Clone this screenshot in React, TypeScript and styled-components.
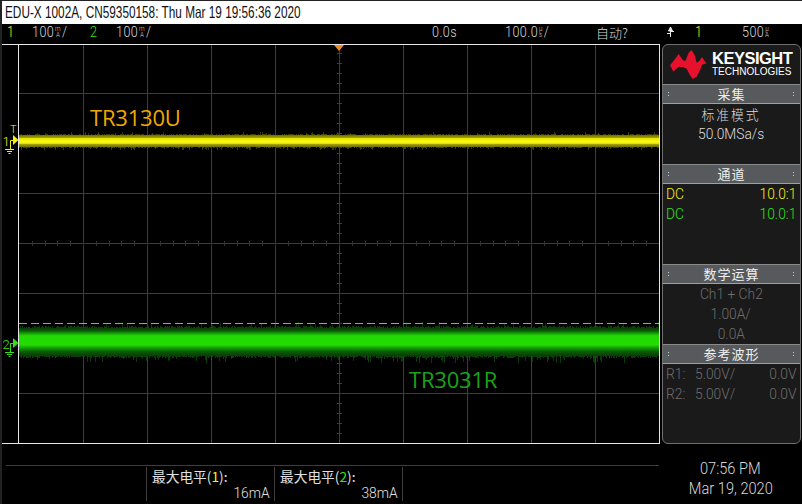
import React from "react";
import styled, { createGlobalStyle, css } from "styled-components";

const GlobalStyle = createGlobalStyle`
	html, body {
		margin: 0;
		padding: 0;
		background: #000;
	}
`;

const UI_FONT = `Roboto, "Liberation Sans", "Noto Sans CJK SC", sans-serif`;
const CJK_FONT = `"Noto Sans CJK SC", Roboto, sans-serif`;

const YELLOW = "#f5f01a";
const GREEN = "#35e01c";

// the scope's own font is tall and thin, so every label is squeezed a bit
const narrow = css`
	display: inline-block;
	white-space: nowrap;
	font-weight: 300;
	transform: scaleX(0.89);
`;

// seeded so the noise stays the same from one load to the next
function makeRandom(seed: number) {
	let s = seed;
	return () => {
		s = (s * 16807) % 2147483647;
		return (s - 1) / 2147483646;
	};
}

const V_LINES = [64, 128, 192, 256, 320, 384, 448, 512, 576];
const H_LINES = [48, 98, 148, 198, 248, 298, 348];

function TraceNoise(props: { top: number; bottom: number; color: string; seed: number; amount: number; reach: number }) {
	const { top, bottom, color, seed, amount, reach } = props;
	const rand = makeRandom(seed);
	const bars: React.ReactNode[] = [];
	for (let x = 0; x < 640; x++) {
		const up = rand() * amount;
		const down = rand() * amount;
		const spike = rand();
		bars.push(<rect key={`u${x}`} x={x} y={top - up} width={1} height={up} fill={color} opacity={0.7} />);
		bars.push(<rect key={`d${x}`} x={x} y={bottom} width={1} height={down} fill={color} opacity={0.7} />);
		if (spike > 0.86) {
			bars.push(<rect key={`s${x}`} x={x} y={bottom} width={1} height={amount + rand() * reach} fill={color} opacity={0.65} />);
		}
		if (spike < 0.06) {
			const len = amount + rand() * reach;
			bars.push(<rect key={`t${x}`} x={x} y={top - len} width={1} height={len} fill={color} opacity={0.6} />);
		}
	}
	return <g>{bars}</g>;
}

function Graticule() {
	return (
		<PlotSvg width={640} height={398} viewBox="0 0 640 398" shapeRendering="crispEdges">
			<defs>
				<linearGradient id="yellowBand" x1="0" y1="0" x2="0" y2="1">
					<stop offset="0" stopColor="#6e6c00" />
					<stop offset="0.2" stopColor="#9a9800" />
					<stop offset="0.27" stopColor="#e2e000" />
					<stop offset="0.42" stopColor="#f4f200" />
					<stop offset="0.58" stopColor="#fbf920" />
					<stop offset="0.72" stopColor="#e2e000" />
					<stop offset="0.8" stopColor="#9a9800" />
					<stop offset="1" stopColor="#6e6c00" />
				</linearGradient>
				<linearGradient id="greenBand" x1="0" y1="0" x2="0" y2="1">
					<stop offset="0" stopColor="#083c05" />
					<stop offset="0.1" stopColor="#0c5a07" />
					<stop offset="0.18" stopColor="#129a06" />
					<stop offset="0.28" stopColor="#22d802" />
					<stop offset="0.6" stopColor="#24dc02" />
					<stop offset="0.72" stopColor="#129a06" />
					<stop offset="0.85" stopColor="#0c5a07" />
					<stop offset="1" stopColor="#083c05" />
				</linearGradient>
			</defs>
			{V_LINES.map((x) => (
				<rect key={x} x={x} y={0} width={1} height={398} fill="#3c3c3c" />
			))}
			{H_LINES.map((y) => (
				<rect key={y} x={0} y={y} width={640} height={1} fill="#3c3c3c" />
			))}
			{Array.from({ length: 39 }, (_, i) => (
				<rect key={i} x={318} y={10 * i + 8} width={5} height={1} fill="#3c3c3c" />
			))}
			{Array.from({ length: 49 }, (_, i) => (
				<rect key={i} x={Math.round(12.8 * (i + 1))} y={196} width={1} height={5} fill="#333" />
			))}
			<TraceNoise top={90} bottom={102} color="#5c5a00" seed={4211} amount={1} reach={2.5} />
			<rect x={0} y={90} width={640} height={12} fill="url(#yellowBand)" />
			<TraceNoise top={283} bottom={311} color="#0c5a08" seed={981} amount={2} reach={5} />
			<rect x={0} y={283} width={640} height={28} fill="url(#greenBand)" />
			{Array.from({ length: 54 }, (_, i) => (
				<rect key={i} x={12 * i} y={278} width={8} height={1} fill="#f08c28" />
			))}
		</PlotSvg>
	);
}

function ChannelMarker({ num, color }: { num: string; color: string }) {
	return (
		<MarkerSvg width={18} height={22} viewBox="0 0 18 22">
			<text x={0.5} y={12} fontSize={13} fontFamily="Roboto, sans-serif" fontWeight={300} fill={color}>
				{num}
			</text>
			<path d="M8.5 15 V6.5 H11 M3 15.5 H12 M5 17.5 H10 M6.5 19.5 H8.5" stroke={color} strokeWidth={1} fill="none" />
			<path d="M11 1 L16.5 6 L11 11 Z" fill={color} />
		</MarkerSvg>
	);
}

function KeysightLogo() {
	return (
		<LogoSvg width={37} height={29} viewBox="0 0 37 29">
			<path
				d="M0 15.3 L4.3 10 L8.7 4 L12.7 10 L15.3 11 L18.7 2.7 L21.3 0 L24.3 4.3 L26.7 12.7 L29.3 11 L32 7 L35.3 12 L36.7 13.3 L32 14.7 L30 20 L26.7 26.7 L22.7 29 L20 25.3 L16.7 18.7 L13 17 L9.3 16.7 L6 19 L3.3 21.7 L1 17 Z"
				fill="#e8112d"
			/>
		</LogoSvg>
	);
}

function Unit({ top, bottom }: { top: string; bottom: string }) {
	return (
		<UnitStack>
			<span>{top}</span>
			<span>{bottom}</span>
		</UnitStack>
	);
}

function SectionHeader({ children }: { children: React.ReactNode }) {
	return (
		<Header>
			<Grip />
			<span>{children}</span>
			<Grip />
		</Header>
	);
}

export default function App() {
	return (
		<Screen>
			<GlobalStyle />
			<TitleBar>
				<TitleText>EDU-X 1002A, CN59350158: Thu Mar 19 19:56:36 2020</TitleText>
			</TitleBar>
			<StatusBar>
				<ChannelCell $left={7} $color={YELLOW}>1</ChannelCell>
				<StatusCell $left={32}>100<Unit top="m" bottom="A" />/</StatusCell>
				<ChannelCell $left={90} $color={GREEN}>2</ChannelCell>
				<StatusCell $left={116}>100<Unit top="m" bottom="A" />/</StatusCell>
				<StatusCell $left={432}>0.0s</StatusCell>
				<StatusCell $left={505}>100.0<Unit top="µ" bottom="s" />/</StatusCell>
				<StatusCell $left={596} $cjk>自动?</StatusCell>
				<TriggerIcon width={10} height={12} viewBox="0 0 10 12">
					<path d="M4.5 11 V1 M1 7.5 H4.5 M4.5 5.5 H8 M2.5 5 L4.5 1 L6.5 5 Z" stroke="#e8e8e8" strokeWidth={1} fill="#e8e8e8" />
				</TriggerIcon>
				<ChannelCell $left={695} $color={YELLOW}>1</ChannelCell>
				<StatusCell $left={742}>500<Unit top="µ" bottom="A" /></StatusCell>
			</StatusBar>
			<Middle>
				<Plot>
					<Graticule />
					<TriggerTop />
					<TriggerT>T</TriggerT>
					<MarkerSlot $top={89}>
						<ChannelMarker num="1" color={YELLOW} />
					</MarkerSlot>
					<MarkerSlot $top={292}>
						<ChannelMarker num="2" color={GREEN} />
					</MarkerSlot>
					<TraceLabel $left={90} $top={59} $color="#f0a800">TR3130U</TraceLabel>
					<TraceLabel $left={409} $top={321} $color="#1aa31a">TR3031R</TraceLabel>
				</Plot>
				<Panel>
					<LogoBox>
						<KeysightLogo />
						<Brand>
							<BrandName>KEYSIGHT</BrandName>
							<BrandSub>TECHNOLOGIES</BrandSub>
						</Brand>
					</LogoBox>
					<SectionHeader>采集</SectionHeader>
					<Section $height={60}>
						<CenterLine $cjk><span>标准模式</span></CenterLine>
						<CenterLine><span>50.0MSa/s</span></CenterLine>
					</Section>
					<SectionHeader>通道</SectionHeader>
					<Section $height={80}>
						<SplitLine $color={YELLOW}><LeftText>DC</LeftText><RightText>10.0:1</RightText></SplitLine>
						<SplitLine $color={GREEN}><LeftText>DC</LeftText><RightText>10.0:1</RightText></SplitLine>
					</Section>
					<SectionHeader>数学运算</SectionHeader>
					<Section $height={60}>
						<CenterLine $dim><span>Ch1 + Ch2</span></CenterLine>
						<CenterLine $dim><span>1.00A/</span></CenterLine>
						<CenterLine $dim><span>0.0A</span></CenterLine>
					</Section>
					<SectionHeader>参考波形</SectionHeader>
					<Section $height={78}>
						<RefLine><LeftText>R1:</LeftText><LeftText>5.00V/</LeftText><RightText>0.0V</RightText></RefLine>
						<RefLine><LeftText>R2:</LeftText><LeftText>5.00V/</LeftText><RightText>0.0V</RightText></RefLine>
					</Section>
				</Panel>
			</Middle>
			<Bottom>
				<Measures>
					<MeasureBlank />
					<Measure>
						<MeasureName>最大电平(<Num $color={YELLOW}>1</Num>):</MeasureName>
						<MeasureValue><RightText>16mA</RightText></MeasureValue>
					</Measure>
					<Measure>
						<MeasureName>最大电平(<Num $color={GREEN}>2</Num>):</MeasureName>
						<MeasureValue><RightText>38mA</RightText></MeasureValue>
					</Measure>
				</Measures>
				<Clock>
					<ClockText>07:56 PM</ClockText>
					<ClockText>Mar 19, 2020</ClockText>
				</Clock>
			</Bottom>
		</Screen>
	);
}

const Screen = styled.div`
	width: 802px;
	height: 504px;
	background: #000;
	display: flex;
	flex-direction: column;
	overflow: hidden;
	border-left: 2px solid #222;
	box-sizing: border-box;
	font-family: ${UI_FONT};
`;

const TitleBar = styled.div`
	height: 24px;
	background: #fff;
	border-top: 1px solid #222;
	box-sizing: border-box;
	padding-left: 3px;
	color: #111;
	overflow: hidden;
`;

const TitleText = styled.span`
	display: inline-block;
	white-space: nowrap;
	font: 16.5px/22px "Liberation Sans", sans-serif;
	transform: scaleX(0.715);
	transform-origin: left center;
`;

const StatusBar = styled.div`
	position: relative;
	height: 20px;
	flex: none;
`;

const StatusCell = styled.div<{ $left: number; $cjk?: boolean }>`
	position: absolute;
	left: ${(p) => p.$left - 2}px;
	top: -2px;
	height: 20px;
	display: flex;
	align-items: center;
	color: #d8d8d8;
	font-family: ${(p) => (p.$cjk ? CJK_FONT : UI_FONT)};
	font-weight: 300;
	font-size: ${(p) => (p.$cjk ? 13 : 15)}px;
	letter-spacing: ${(p) => (p.$cjk ? 0 : 0.5)}px;
	transform: scaleX(${(p) => (p.$cjk ? 1 : 0.84)});
	transform-origin: left center;
`;

const ChannelCell = styled(StatusCell)<{ $color: string }>`
	color: ${(p) => p.$color};
`;

const UnitStack = styled.span`
	display: inline-flex;
	flex-direction: column;
	align-items: center;
	font-size: 7.5px;
	line-height: 6px;
	margin: 0 1px;
`;

const TriggerIcon = styled.svg`
	position: absolute;
	left: 664px;
	top: 2px;
`;

const Middle = styled.div`
	display: flex;
	height: 400px;
	flex: none;
`;

const Plot = styled.div`
	position: relative;
	width: 658px;
	height: 400px;
	flex: none;
	box-sizing: border-box;
	border-top: 1px solid #e6e6e6;
	border-bottom: 1px solid #e6e6e6;
	border-right: 1px solid #e6e6e6;
	padding-left: 16px;
`;

const PlotSvg = styled.svg`
	display: block;
	border-left: 1px solid #e6e6e6;
	box-sizing: content-box;
`;

const TriggerTop = styled.div`
	position: absolute;
	left: 332px;
	top: 0;
	width: 0;
	height: 0;
	border-left: 5px solid transparent;
	border-right: 5px solid transparent;
	border-top: 6px solid #f08a24;
`;

const TriggerT = styled.div`
	position: absolute;
	left: 8px;
	top: 79px;
	color: ${YELLOW};
	font: 300 11px/11px Roboto, sans-serif;
`;

const MarkerSlot = styled.div<{ $top: number }>`
	position: absolute;
	left: 0;
	top: ${(p) => p.$top}px;
`;

const MarkerSvg = styled.svg`
	display: block;
`;

const TraceLabel = styled.div<{ $left: number; $top: number; $color: string }>`
	position: absolute;
	left: ${(p) => p.$left - 2}px;
	top: ${(p) => p.$top}px;
	color: ${(p) => p.$color};
	font: 22px/26px "Open Sans", sans-serif;
	letter-spacing: -0.2px;
`;

const Panel = styled.div`
	width: 139px;
	height: 400px;
	flex: none;
	margin-left: 2px;
	box-sizing: border-box;
	background: #1a1a1a;
	border: 1px solid #707070;
	border-radius: 6px;
	display: flex;
	flex-direction: column;
	overflow: hidden;
`;

const LogoBox = styled.div`
	height: 39px;
	flex: none;
	display: flex;
	align-items: center;
	padding-left: 7px;
	gap: 5px;
`;

const LogoSvg = styled.svg`
	display: block;
`;

const Brand = styled.div`
	display: flex;
	flex-direction: column;
	gap: 1px;
	margin-bottom: 2px;
	color: #fff;
	font-family: "Liberation Sans", sans-serif;
`;

const BrandName = styled.div`
	font-size: 16.5px;
	line-height: 16px;
	font-weight: 700;
	letter-spacing: -0.5px;
`;

const BrandSub = styled.div`
	font-size: 10px;
	line-height: 10px;
`;

const Header = styled.div`
	height: 20px;
	flex: none;
	box-sizing: border-box;
	background: #565a5d;
	border-top: 1px solid #8a8a8a;
	border-bottom: 1px solid #a0a0a0;
	display: flex;
	align-items: center;
	justify-content: space-between;
	padding: 0 4px;
	color: #f0f0f0;
	font-family: ${CJK_FONT};
	font-size: 13px;
	line-height: 16px;
	letter-spacing: 1px;
`;

const Grip = styled.i`
	width: 4px;
	height: 7px;
	background: radial-gradient(circle, #c8c8c8 0.7px, transparent 0.8px) 0 0 / 3px 3px;
`;

const Section = styled.div<{ $height: number }>`
	height: ${(p) => p.$height}px;
	flex: none;
	box-sizing: border-box;
	padding: 0 4px 0 3px;
`;

const CenterLine = styled.div<{ $cjk?: boolean; $dim?: boolean }>`
	height: 20px;
	line-height: 20px;
	text-align: center;
	font-family: ${(p) => (p.$cjk ? CJK_FONT : UI_FONT)};
	font-size: ${(p) => (p.$cjk ? 13.5 : 15.5)}px;
	color: ${(p) => (p.$dim ? "#6e6e6e" : "#dcdcdc")};
	span {
		${narrow}
		${(p) => p.$cjk && "letter-spacing: 2px; transform: scaleX(0.95);"}
	}
`;

const LeftText = styled.span`
	${narrow}
	transform-origin: left center;
`;

const RightText = styled.span`
	${narrow}
	transform-origin: right center;
`;

const SplitLine = styled.div<{ $color: string }>`
	height: 20px;
	line-height: 20px;
	display: flex;
	justify-content: space-between;
	font-size: 15.5px;
	color: ${(p) => p.$color};
`;

const RefLine = styled.div`
	height: 20px;
	line-height: 20px;
	display: grid;
	grid-template-columns: 29px 1fr auto;
	font-size: 15.5px;
	color: #6e6e6e;
`;

const Bottom = styled.div`
	flex: 1;
	display: flex;
	min-height: 0;
`;

const Measures = styled.div`
	width: 653px;
	flex: none;
	margin: 21px 0 0 4px;
	height: 36px;
	border-top: 1px solid #3c3c3c;
	display: grid;
	grid-template-columns: 141px 128px 128px 1fr;
	padding-top: 1px;
	box-sizing: border-box;
`;

const MeasureBlank = styled.div`
	border-right: 1px solid #3c3c3c;
`;

const Measure = styled.div`
	border-right: 1px solid #3c3c3c;
	padding: 0 4px 0 5px;
	display: flex;
	flex-direction: column;
	color: #e0e0e0;
`;

const MeasureName = styled.div`
	font-family: ${CJK_FONT};
	font-size: 13.7px;
	line-height: 18px;
`;

const Num = styled.span<{ $color: string }>`
	color: ${(p) => p.$color};
`;

const MeasureValue = styled.div`
	font-size: 15.5px;
	line-height: 16px;
	text-align: right;
`;

const Clock = styled.div`
	flex: 1;
	display: flex;
	flex-direction: column;
	align-items: center;
	gap: 3px;
	padding-top: 16px;
	color: #d8d8d8;
	font-size: 17px;
	line-height: 17px;
`;

const ClockText = styled.span`
	${narrow}
	transform: scaleX(0.86);
`;
